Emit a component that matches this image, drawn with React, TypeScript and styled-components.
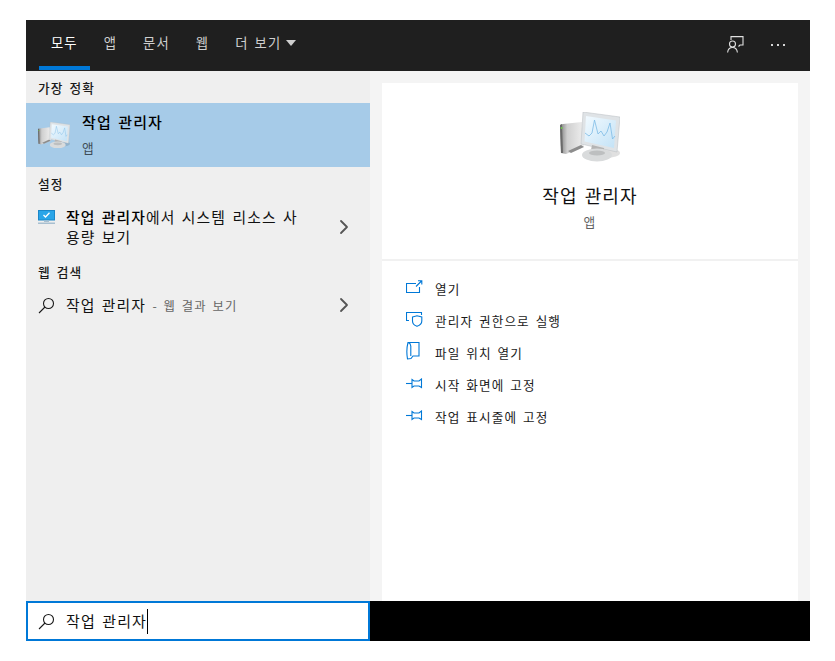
import React from 'react'
import styled, { createGlobalStyle } from 'styled-components'
import { ChevronRight } from 'lucide-react'

const GlobalStyle = createGlobalStyle`
    html, body {
        margin: 0;
        padding: 0;
        background: #fff;
        font-family: "Noto Sans CJK KR", "Noto Sans", sans-serif;
        letter-spacing: 0.07em;
        word-spacing: 0.12em;
    }
`

const Page = styled.div`
    padding: 20px 25px 20px 26px;
`

const Window = styled.div`
    width: 784px;
    height: 621px;
    display: grid;
    grid-template-rows: 51px 530px 40px;
    grid-template-columns: 344px 440px;
`

const TopBar = styled.div`
    grid-column: 1 / 3;
    background: #1f1f1f;
    display: flex;
    align-items: stretch;
    justify-content: space-between;
`

const Tabs = styled.div`
    display: flex;
    gap: 2px;
    padding-left: 13px;
`

const Tab = styled.div<{ $active?: boolean }>`
    height: 50px;
    box-sizing: border-box;
    padding: 0 12px 2px;
    display: flex;
    align-items: center;
    gap: 5px;
    font-size: 13.3px;
    color: ${p => p.$active ? '#ffffff' : '#cfcfcf'};
    border-bottom: 4px solid ${p => p.$active ? '#0078d7' : 'transparent'};
`

const Caret = styled.span`
    width: 0;
    height: 0;
    border-left: 5.5px solid transparent;
    border-right: 5.5px solid transparent;
    border-top: 6px solid #cfcfcf;
    margin-top: 1px;
`

const TopActions = styled.div`
    display: flex;
    align-items: center;
    gap: 27px;
    padding-right: 25px;
    padding-bottom: 2px;
    color: #d6d6d6;
`

const LeftPane = styled.div`
    background: #efefef;
    display: flex;
    flex-direction: column;
`

const RightPane = styled.div`
    background: #f4f4f4;
    padding: 12px 12px 0;
    display: flex;
`

const Preview = styled.div`
    flex: 1;
    background: #ffffff;
    display: flex;
    flex-direction: column;
`

const SectionLabel = styled.div`
    height: 32px;
    padding-left: 12px;
    font-size: 12.7px;
    font-weight: 500;
    line-height: 34px;
    color: #1a1a1a;
`

const BestMatch = styled.div`
    height: 64px;
    background: #a6cbe8;
    display: flex;
    align-items: center;
    gap: 12px;
    padding-left: 12px;
`

const BestText = styled.div`
    display: flex;
    flex-direction: column;
    gap: 7px;
    padding-bottom: 2px;
`

const BestTitle = styled.div`
    font-size: 15px;
    font-weight: 500;
    line-height: 20px;
    color: #000;
`

const BestSub = styled.div`
    font-size: 12.7px;
    line-height: 18px;
    color: #3f4d58;
`

const ResultRow = styled.div<{ $tall?: boolean }>`
    height: ${p => p.$tall ? '56px' : '36px'};
    display: flex;
    align-items: center;
    padding: 0 14px 0 12px;
`

const RowIcon = styled.div`
    width: 28px;
    flex: none;
    display: flex;
    align-items: center;
    align-self: stretch;
`

const SettingIcon = styled(RowIcon)`
    align-items: flex-start;
    padding-top: 11px;
`

const RowText = styled.div`
    flex: 1;
    font-size: 14.8px;
    line-height: 20px;
    color: #111;
    max-width: 238px;
    word-break: break-all;
`

const Strong = styled.span`
    font-weight: 500;
    color: #000;
`

const Hint = styled.span`
    font-size: 12.3px;
    color: #666;
`

const Arrow = styled.div`
    margin-left: auto;
    display: flex;
    color: #555;
`

const Hero = styled.div`
    height: 178px;
    flex: none;
    box-sizing: border-box;
    padding-top: 29px;
    border-bottom: 2px solid #f1f1f1;
    display: flex;
    flex-direction: column;
    align-items: center;
`

const HeroTitle = styled.div`
    margin-top: 20px;
    font-size: 18px;
    line-height: 26px;
    color: #111;
`

const HeroSub = styled.div`
    margin-top: 5px;
    font-size: 12.7px;
    line-height: 18px;
    color: #5f5f5f;
`

const Actions = styled.div`
    padding: 11px 0 0 24px;
    display: flex;
    flex-direction: column;
`

const Action = styled.div`
    height: 32px;
    display: flex;
    align-items: center;
    font-size: 12.6px;
    color: #1a1a1a;
`

const ActionIcon = styled.div`
    width: 29px;
    flex: none;
    display: flex;
    margin-top: -2px;
    color: #0078d7;
`

const SearchBox = styled.div`
    box-sizing: border-box;
    background: #fff;
    border: 2px solid #0078d7;
    display: flex;
    align-items: center;
    padding-left: 10px;
`

const SearchText = styled.div`
    margin-left: 11px;
    font-size: 15px;
    color: #111;
    height: 25px;
    line-height: 24px;
    border-right: 1px solid #000;
`

const BlackStrip = styled.div`
    background: #000;
`

const TaskManagerIcon = ({ width, id }: { width: number; id: string }) => (
    <svg width={width} height={width * 50 / 60} viewBox="0 0 60 50">
        <defs>
            <linearGradient id={`${id}-tower`} x1="0" x2="1" y1="0" y2="0">
                <stop offset="0" stopColor="#7f7f7f" />
                <stop offset="0.3" stopColor="#cfcfcf" />
                <stop offset="1" stopColor="#efefef" />
            </linearGradient>
            <linearGradient id={`${id}-screen`} x1="0" x2="1" y1="0" y2="1">
                <stop offset="0" stopColor="#f2faff" />
                <stop offset="1" stopColor="#c3e2f6" />
            </linearGradient>
        </defs>
        <ellipse cx="46" cy="41" rx="14" ry="5" fill="#000" opacity="0.12" />
        <path d="M0 13 L3 12 L22 10 L24 35 L6 42 L1 41 Z" fill={`url(#${id}-tower)`} />
        <path d="M0 13 L2 12 L3 41 L1 41 Z" fill="#6a6a6a" />
        <rect x="0.8" y="15" width="1.6" height="2" fill="#6cc04a" />
        <path d="M8 39 L21 33 L24 35 L11 41 Z" fill="#8d8d8d" />
        <path d="M23 0 L60 5 L57 40 L21 32 Z" fill="#dfe3e6" stroke="#b9bdc0" strokeWidth="0.5" />
        <path d="M26 4 L56 8.5 L54 36 L24.5 29.5 Z" fill={`url(#${id}-screen)`} />
        <path d="M25 21 L29 24 L32 21 L34.5 8 L38 22 L41 19 L44 24 L47 20 L50 11 L52.5 27 L55 24" fill="none" stroke="#7dbbe6" strokeWidth="0.8" />
        <path d="M32 33 L44 36 L44.5 40 L31 38 Z" fill="#b4b4b4" />
        <ellipse cx="37" cy="43" rx="15" ry="6.5" fill="#d9dbdc" />
        <ellipse cx="37" cy="41" rx="8" ry="2.6" fill="#bdbfc0" />
    </svg>
)

const SettingsMonitor = () => (
    <svg width="17" height="15" viewBox="0 0 17 15">
        <rect x="0.5" y="0.5" width="16" height="9.5" fill="#2aa5e8" stroke="#1b87c9" />
        <path d="M5.5 5 L7.5 7 L11.5 2.8" fill="none" stroke="#fff" strokeWidth="1.3" />
        <rect x="6" y="10.5" width="5" height="1.5" fill="#a8bfd0" />
        <rect x="0" y="12.5" width="17" height="1.5" fill="#a8bfd0" />
    </svg>
)

const SearchGlyph = () => (
    <svg width="17" height="17" viewBox="0 0 17 17" fill="none" stroke="#1a1a1a" strokeWidth="1.1">
        <circle cx="10.5" cy="6.5" r="5" />
        <path d="M7 10 L1 16" />
    </svg>
)

const FeedbackGlyph = () => (
    <svg width="17" height="17" viewBox="0 0 17 17" fill="none" stroke="#e0e0e0" strokeWidth="1.1">
        <path d="M4 4 V0.6 H16 V9 H13 L11.5 10.5" />
        <circle cx="5.5" cy="8" r="3" />
        <path d="M0.6 16.5 C1 13 3 11.5 5.5 11.5 C8 11.5 10 13 10.4 16.5" />
    </svg>
)

const DotsGlyph = () => (
    <svg width="14" height="4" viewBox="0 0 14 4" fill="#d6d6d6">
        <rect x="0" y="1" width="2" height="2" />
        <rect x="6" y="1" width="2" height="2" />
        <rect x="12" y="1" width="2" height="2" />
    </svg>
)

const OpenGlyph = () => (
    <svg width="17" height="14" viewBox="0 0 17 14" fill="none" stroke="currentColor" strokeWidth="1.1">
        <path d="M10 3.5 H0.5 V12.5 H13.5 V7" />
        <path d="M10 6.5 L15.5 1 M12 0.7 H15.8 V4.5" />
    </svg>
)

const ShieldGlyph = () => (
    <svg width="17" height="15" viewBox="0 0 17 15" fill="none" stroke="currentColor" strokeWidth="1.1">
        <path d="M3 8.5 H0.5 V0.5 H15.5 V3" />
        <path d="M6.5 5 L11 3.8 L15.8 5 V9 C15.8 11.5 13.5 13.5 11 14.3 C8.5 13.5 6.5 11.5 6.5 9 Z" />
    </svg>
)

const FolderGlyph = () => (
    <svg width="15" height="18" viewBox="0 0 15 18" fill="none" stroke="currentColor" strokeWidth="1.1">
        <path d="M2 0.5 H13 V14 H7 L5 16.5 L1.5 17 C0.8 13 0.8 5 2 0.5 Z" />
        <path d="M2 0.5 C4 1 4.6 2 4.8 4 V14" />
    </svg>
)

const PinGlyph = () => (
    <svg width="17" height="11" viewBox="0 0 17 11" fill="none" stroke="currentColor" strokeWidth="1.1">
        <path d="M0 5.5 H6" />
        <path d="M6 1.5 L8 3 H13 L15.5 1 V9.5 L13 8 H8 L6 9.5 Z" />
    </svg>
)

const actions = [
    { label: '열기', icon: <OpenGlyph /> },
    { label: '관리자 권한으로 실행', icon: <ShieldGlyph /> },
    { label: '파일 위치 열기', icon: <FolderGlyph /> },
    { label: '시작 화면에 고정', icon: <PinGlyph /> },
    { label: '작업 표시줄에 고정', icon: <PinGlyph /> },
]

const App = () => {
    return (
        <Page>
            <GlobalStyle />
            <Window>
                <TopBar>
                    <Tabs>
                        <Tab $active>모두</Tab>
                        <Tab>앱</Tab>
                        <Tab>문서</Tab>
                        <Tab>웹</Tab>
                        <Tab>더 보기<Caret /></Tab>
                    </Tabs>
                    <TopActions>
                        <FeedbackGlyph />
                        <DotsGlyph />
                    </TopActions>
                </TopBar>
                <LeftPane>
                    <SectionLabel>가장 정확</SectionLabel>
                    <BestMatch>
                        <TaskManagerIcon width={32} id="small" />
                        <BestText>
                            <BestTitle>작업 관리자</BestTitle>
                            <BestSub>앱</BestSub>
                        </BestText>
                    </BestMatch>
                    <SectionLabel>설정</SectionLabel>
                    <ResultRow $tall>
                        <SettingIcon><SettingsMonitor /></SettingIcon>
                        <RowText><Strong>작업 관리자</Strong>에서 시스템 리소스 사용량 보기</RowText>
                        <Arrow><ChevronRight size={24} strokeWidth={1.8} /></Arrow>
                    </ResultRow>
                    <SectionLabel>웹 검색</SectionLabel>
                    <ResultRow>
                        <RowIcon><SearchGlyph /></RowIcon>
                        <RowText>작업 관리자 <Hint>- 웹 결과 보기</Hint></RowText>
                        <Arrow><ChevronRight size={24} strokeWidth={1.8} /></Arrow>
                    </ResultRow>
                </LeftPane>
                <RightPane>
                    <Preview>
                        <Hero>
                            <TaskManagerIcon width={60} id="large" />
                            <HeroTitle>작업 관리자</HeroTitle>
                            <HeroSub>앱</HeroSub>
                        </Hero>
                        <Actions>
                            {actions.map(a => (
                                <Action key={a.label}>
                                    <ActionIcon>{a.icon}</ActionIcon>
                                    {a.label}
                                </Action>
                            ))}
                        </Actions>
                    </Preview>
                </RightPane>
                <SearchBox>
                    <SearchGlyph />
                    <SearchText>작업 관리자</SearchText>
                </SearchBox>
                <BlackStrip />
            </Window>
        </Page>
    )
}

export default App
